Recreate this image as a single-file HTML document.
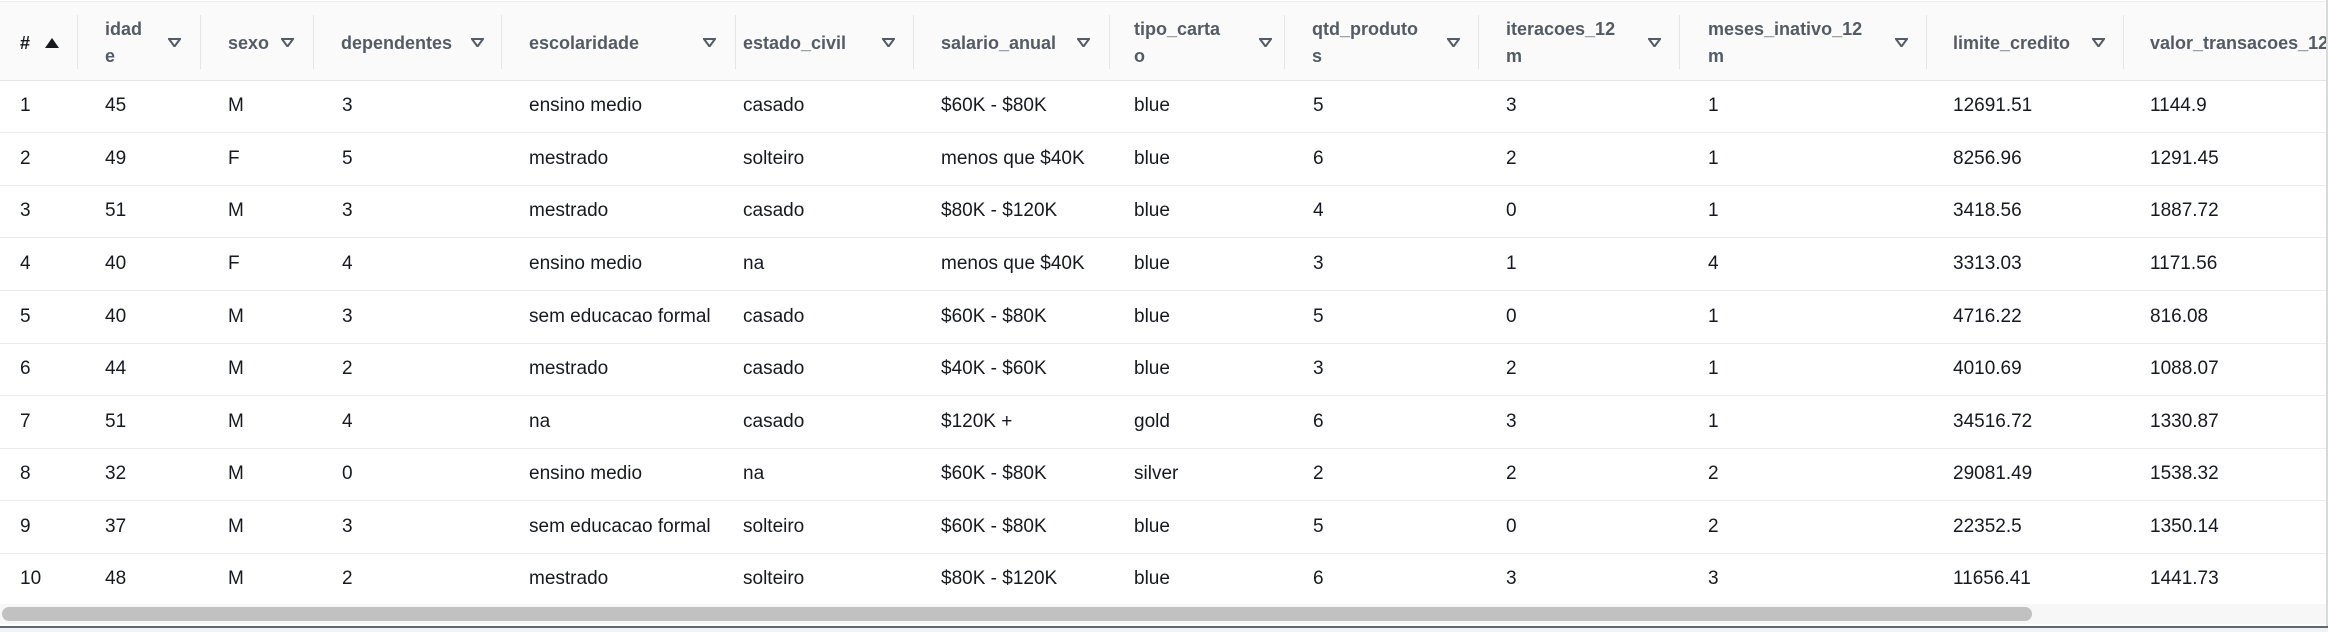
<!DOCTYPE html>
<html><head><meta charset="utf-8"><style>
html,body{margin:0;padding:0;background:#fff;width:2328px;height:632px;overflow:hidden;font-family:"Liberation Sans",sans-serif}
.hd{position:absolute;left:0;top:1px;width:2328px;height:78px;background:#fafafa;border-top:1px solid #eaeded;border-bottom:1px solid #e4e6e6}
.th{position:absolute;top:0;height:78px;font-weight:bold;font-size:18px;color:#545b64;line-height:27px}
.th .t{position:absolute;left:28px;top:28px;white-space:nowrap}
.th .t2{top:14px}
.th .sep{position:absolute;left:0;top:13px;width:1px;height:54px;background:#e4e6e6}
.fi{position:absolute;top:36px;width:0;height:0}
.fi svg{display:block}
.row{position:absolute;left:0;width:2328px;height:52px;border-bottom:1px solid #eaeded;font-size:19px;color:#16191f}
.row span{position:absolute;top:0;line-height:52px;white-space:nowrap}
.sb{position:absolute;left:0;top:604px;width:2326px;height:20px;background:#f7f7f7}
.th2{position:absolute;left:2px;top:607px;width:2030px;height:14px;border-radius:7px;background:#c1c1c1}
.bl{position:absolute;left:0;top:626px;width:2328px;height:2px;background:#5f6770}
.bt{position:absolute;left:0;top:628px;width:2328px;height:4px;background:#f1f3f3}
.rb{position:absolute;left:2326px;top:0;width:2px;height:626px;background:#d5dbdb}
</style></head><body>
<div class="hd">
<div class="th" style="left:0"><span class="t" style="left:20px;color:#16191f">#</span><div class="fi" style="left:45px;top:36px"><svg width="14" height="10"><polygon points="7,0 14,10 0,10" fill="#16191f"/></svg></div></div>
<div class="th" style="left:77px"><div class="sep"></div><span class="t t2">idad<br>e</span><div class="fi" style="left:91px"><svg width="13" height="9"><polygon points="1,1 12,1 6.5,8.5" fill="none" stroke="#545b64" stroke-width="2"/></svg></div></div>
<div class="th" style="left:200px"><div class="sep"></div><span class="t">sexo</span><div class="fi" style="left:81px"><svg width="13" height="9"><polygon points="1,1 12,1 6.5,8.5" fill="none" stroke="#545b64" stroke-width="2"/></svg></div></div>
<div class="th" style="left:313px"><div class="sep"></div><span class="t">dependentes</span><div class="fi" style="left:158px"><svg width="13" height="9"><polygon points="1,1 12,1 6.5,8.5" fill="none" stroke="#545b64" stroke-width="2"/></svg></div></div>
<div class="th" style="left:501px"><div class="sep"></div><span class="t">escolaridade</span><div class="fi" style="left:202px"><svg width="13" height="9"><polygon points="1,1 12,1 6.5,8.5" fill="none" stroke="#545b64" stroke-width="2"/></svg></div></div>
<div class="th" style="left:735px"><div class="sep"></div><span class="t" style="left:8px">estado_civil</span><div class="fi" style="left:147px"><svg width="13" height="9"><polygon points="1,1 12,1 6.5,8.5" fill="none" stroke="#545b64" stroke-width="2"/></svg></div></div>
<div class="th" style="left:913px"><div class="sep"></div><span class="t" style="left:28px">salario_anual</span><div class="fi" style="left:164px"><svg width="13" height="9"><polygon points="1,1 12,1 6.5,8.5" fill="none" stroke="#545b64" stroke-width="2"/></svg></div></div>
<div class="th" style="left:1109px"><div class="sep"></div><span class="t t2" style="left:25px">tipo_carta<br>o</span><div class="fi" style="left:150px"><svg width="13" height="9"><polygon points="1,1 12,1 6.5,8.5" fill="none" stroke="#545b64" stroke-width="2"/></svg></div></div>
<div class="th" style="left:1284px"><div class="sep"></div><span class="t t2">qtd_produto<br>s</span><div class="fi" style="left:163px"><svg width="13" height="9"><polygon points="1,1 12,1 6.5,8.5" fill="none" stroke="#545b64" stroke-width="2"/></svg></div></div>
<div class="th" style="left:1478px"><div class="sep"></div><span class="t t2">iteracoes_12<br>m</span><div class="fi" style="left:170px"><svg width="13" height="9"><polygon points="1,1 12,1 6.5,8.5" fill="none" stroke="#545b64" stroke-width="2"/></svg></div></div>
<div class="th" style="left:1679px"><div class="sep"></div><span class="t t2" style="left:29px">meses_inativo_12<br>m</span><div class="fi" style="left:216px"><svg width="13" height="9"><polygon points="1,1 12,1 6.5,8.5" fill="none" stroke="#545b64" stroke-width="2"/></svg></div></div>
<div class="th" style="left:1926px"><div class="sep"></div><span class="t" style="left:27px">limite_credito</span><div class="fi" style="left:166px"><svg width="13" height="9"><polygon points="1,1 12,1 6.5,8.5" fill="none" stroke="#545b64" stroke-width="2"/></svg></div></div>
<div class="th" style="left:2123px"><div class="sep"></div><span class="t" style="left:27px">valor_transacoes_12</span></div>
</div>

<div class="row" style="top:80px"><span style="left:20px">1</span><span style="left:105px">45</span><span style="left:228px">M</span><span style="left:342px">3</span><span style="left:529px">ensino medio</span><span style="left:743px">casado</span><span style="left:941px">$60K - $80K</span><span style="left:1134px">blue</span><span style="left:1313px">5</span><span style="left:1506px">3</span><span style="left:1708px">1</span><span style="left:1953px">12691.51</span><span style="left:2150px">1144.9</span></div>
<div class="row" style="top:133px"><span style="left:20px">2</span><span style="left:105px">49</span><span style="left:228px">F</span><span style="left:342px">5</span><span style="left:529px">mestrado</span><span style="left:743px">solteiro</span><span style="left:941px">menos que $40K</span><span style="left:1134px">blue</span><span style="left:1313px">6</span><span style="left:1506px">2</span><span style="left:1708px">1</span><span style="left:1953px">8256.96</span><span style="left:2150px">1291.45</span></div>
<div class="row" style="top:185px"><span style="left:20px">3</span><span style="left:105px">51</span><span style="left:228px">M</span><span style="left:342px">3</span><span style="left:529px">mestrado</span><span style="left:743px">casado</span><span style="left:941px">$80K - $120K</span><span style="left:1134px">blue</span><span style="left:1313px">4</span><span style="left:1506px">0</span><span style="left:1708px">1</span><span style="left:1953px">3418.56</span><span style="left:2150px">1887.72</span></div>
<div class="row" style="top:238px"><span style="left:20px">4</span><span style="left:105px">40</span><span style="left:228px">F</span><span style="left:342px">4</span><span style="left:529px">ensino medio</span><span style="left:743px">na</span><span style="left:941px">menos que $40K</span><span style="left:1134px">blue</span><span style="left:1313px">3</span><span style="left:1506px">1</span><span style="left:1708px">4</span><span style="left:1953px">3313.03</span><span style="left:2150px">1171.56</span></div>
<div class="row" style="top:291px"><span style="left:20px">5</span><span style="left:105px">40</span><span style="left:228px">M</span><span style="left:342px">3</span><span style="left:529px">sem educacao formal</span><span style="left:743px">casado</span><span style="left:941px">$60K - $80K</span><span style="left:1134px">blue</span><span style="left:1313px">5</span><span style="left:1506px">0</span><span style="left:1708px">1</span><span style="left:1953px">4716.22</span><span style="left:2150px">816.08</span></div>
<div class="row" style="top:343px"><span style="left:20px">6</span><span style="left:105px">44</span><span style="left:228px">M</span><span style="left:342px">2</span><span style="left:529px">mestrado</span><span style="left:743px">casado</span><span style="left:941px">$40K - $60K</span><span style="left:1134px">blue</span><span style="left:1313px">3</span><span style="left:1506px">2</span><span style="left:1708px">1</span><span style="left:1953px">4010.69</span><span style="left:2150px">1088.07</span></div>
<div class="row" style="top:396px"><span style="left:20px">7</span><span style="left:105px">51</span><span style="left:228px">M</span><span style="left:342px">4</span><span style="left:529px">na</span><span style="left:743px">casado</span><span style="left:941px">$120K +</span><span style="left:1134px">gold</span><span style="left:1313px">6</span><span style="left:1506px">3</span><span style="left:1708px">1</span><span style="left:1953px">34516.72</span><span style="left:2150px">1330.87</span></div>
<div class="row" style="top:448px"><span style="left:20px">8</span><span style="left:105px">32</span><span style="left:228px">M</span><span style="left:342px">0</span><span style="left:529px">ensino medio</span><span style="left:743px">na</span><span style="left:941px">$60K - $80K</span><span style="left:1134px">silver</span><span style="left:1313px">2</span><span style="left:1506px">2</span><span style="left:1708px">2</span><span style="left:1953px">29081.49</span><span style="left:2150px">1538.32</span></div>
<div class="row" style="top:501px"><span style="left:20px">9</span><span style="left:105px">37</span><span style="left:228px">M</span><span style="left:342px">3</span><span style="left:529px">sem educacao formal</span><span style="left:743px">solteiro</span><span style="left:941px">$60K - $80K</span><span style="left:1134px">blue</span><span style="left:1313px">5</span><span style="left:1506px">0</span><span style="left:1708px">2</span><span style="left:1953px">22352.5</span><span style="left:2150px">1350.14</span></div>
<div class="row" style="top:553px;border-bottom:none"><span style="left:20px">10</span><span style="left:105px">48</span><span style="left:228px">M</span><span style="left:342px">2</span><span style="left:529px">mestrado</span><span style="left:743px">solteiro</span><span style="left:941px">$80K - $120K</span><span style="left:1134px">blue</span><span style="left:1313px">6</span><span style="left:1506px">3</span><span style="left:1708px">3</span><span style="left:1953px">11656.41</span><span style="left:2150px">1441.73</span></div>

<div class="sb"></div><div class="th2"></div>
<div class="rb"></div>
<div class="bl"></div><div class="bt"></div>
</body></html>
